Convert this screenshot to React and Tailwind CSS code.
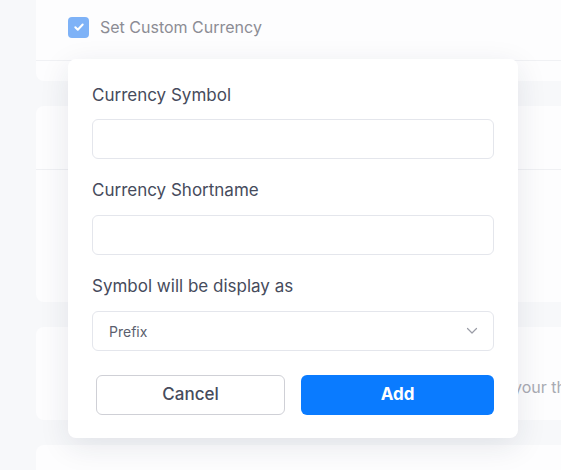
import React from 'react';

export default function App() {
    return (
        <div className="relative w-[561px] h-[470px] overflow-hidden bg-[#f7f8fa] font-['Inter',sans-serif]">
            <div className="flex flex-col gap-[25px] pl-9 pr-0">
                <div className="-mt-3 h-[93px] w-[560px] rounded-lg bg-[#fdfdfe] flex flex-col">
                    <div className="flex items-center gap-[11px] pl-8 pt-[27px]">
                        <span className="w-[21px] h-[21px] rounded-[4px] bg-[#7eb2f7] flex items-center justify-center">
                            <svg width="12" height="12" viewBox="0 0 12 12" fill="none">
                                <path d="M2.3 6.2l2.5 2.5 4.9-5.2" stroke="white" strokeWidth="2" strokeLinecap="round" strokeLinejoin="round" />
                            </svg>
                        </span>
                        <span className="text-[16px] text-[#8c8c94]">Set Custom Currency</span>
                    </div>
                    <div className="mt-[21px] border-t border-[#f0f1f4]" />
                </div>
                <div className="h-[196px] w-[560px] rounded-lg bg-[#fdfdfe] flex flex-col">
                    <div className="h-[64px] border-b border-[#eff0f3]" />
                </div>
                <div className="h-[93px] w-[560px] rounded-lg bg-[#fdfdfe] pt-[48px]">
                    <span className="block pl-[477px] whitespace-nowrap text-[16px] leading-6 text-[#a9abb3]">your theme</span>
                </div>
                <div className="h-[60px] w-[560px] rounded-lg bg-[#fdfdfe]" />
            </div>

            <div className="absolute left-[68px] top-[59px] w-[450px] rounded-lg bg-white shadow-[0_8px_30px_rgba(30,40,70,0.10)] px-6 pt-6 pb-[23px]">
                <label className="block h-6 leading-6 text-[17px] text-[#464b5c]">Currency Symbol</label>
                <input className="mt-3 block w-full h-10 rounded-md border border-[#e4e6ec] outline-none px-4" />
                <label className="mt-[19px] block h-6 leading-6 text-[17px] text-[#464b5c]">Currency Shortname</label>
                <input className="mt-[13px] block w-full h-10 rounded-md border border-[#e4e6ec] outline-none px-4" />
                <label className="mt-[19px] block h-6 leading-6 text-[17px] text-[#464b5c]">Symbol will be display as</label>
                <div className="mt-[13px] h-10 rounded-md border border-[#e4e6ec] flex items-center justify-between pl-4 pr-[15px]">
                    <span className="text-[14px] text-[#5b5f6e]">Prefix</span>
                    <svg width="12" height="8" viewBox="0 0 12 8" fill="none">
                        <path d="M1.5 1.5l4.5 4.5 4.5-4.5" stroke="#9a9ca6" strokeWidth="1.2" strokeLinecap="round" strokeLinejoin="round" />
                    </svg>
                </div>
                <div className="mt-6 flex gap-4 pl-1">
                    <button className="w-[189px] h-10 rounded-md border border-[#cfd0d6] bg-white text-[17px] font-medium text-[#464b5c]">Cancel</button>
                    <button className="flex-1 h-10 rounded-md bg-[#0a7bff] text-[17px] font-bold text-white">Add</button>
                </div>
            </div>
        </div>
    );
}
